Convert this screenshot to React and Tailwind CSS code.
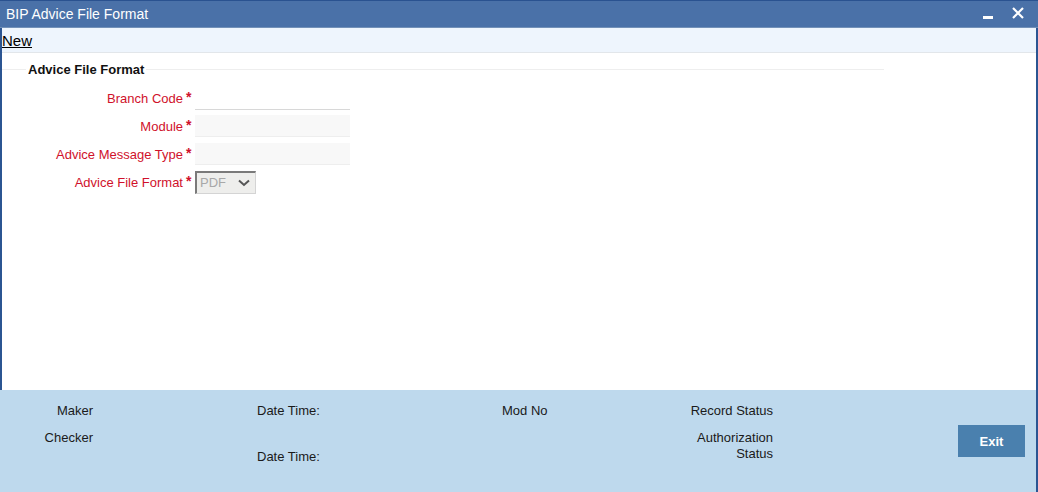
import React from "react";

const F = { fontFamily: '"Liberation Sans", Arial, sans-serif' };

function Row({ label, children }) {
  return (
    <div className="flex h-[28px] items-center">
      <div className="w-[181px] text-right text-[13px] text-[#d0112b] leading-none">{label}</div>
      <div className="w-[12px] self-start pt-[6px] pl-[3px] text-[14px] font-bold text-[#d0112b] leading-none">*</div>
      {children}
    </div>
  );
}

export default function App() {
  return (
    <div style={F} className="w-[1038px] h-[492px] flex flex-col bg-white overflow-hidden">
      <div className="h-[28px] shrink-0 bg-[#4a71a8] border-t border-[#2a5290] border-b border-b-[#7391b8] flex items-center pl-[6px] pr-[14px] text-white">
        <span className="text-[14px] leading-none">BIP Advice File Format</span>
        <div className="ml-auto flex items-center gap-[19px]">
          <div className="w-[10px] h-[3px] bg-white mt-[6px]" />
          <svg width="12" height="12" viewBox="0 0 12 12" className="mb-[3px]">
            <path d="M1 1 L11 11 M11 1 L1 11" stroke="white" strokeWidth="2.2" />
          </svg>
        </div>
      </div>
      <div className="flex-1 flex flex-col border-x-2 border-[#2b5592]">
        <div className="h-[25px] shrink-0 bg-[#eef5fd] border-b border-[#e2e6ea] flex items-center pl-0">
          <span className="text-[15px] underline text-black leading-none">New</span>
        </div>
        <div className="flex-1 flex flex-col">
          <div className="flex items-center h-[20px] mt-[6px] w-[882px]">
            <div className="w-[24px] h-px bg-[#eeeeee]" />
            <span className="px-[2px] text-[13px] font-bold text-[#111] leading-none">Advice File Format</span>
            <div className="flex-1 h-px bg-[#eeeeee]" />
          </div>
          <div className="flex flex-col mt-[5px]">
            <Row label="Branch Code">
              <div className="w-[155px] h-[22px] mt-[2px] bg-white border-b-[1.5px] border-[#d8d8d8]" />
            </Row>
            <Row label="Module">
              <div className="w-[155px] h-[22px] bg-[#f8f8f8] border-b border-[#eeeeee]" />
            </Row>
            <Row label="Advice Message Type">
              <div className="w-[155px] h-[22px] bg-[#f8f8f8] border-b border-[#eeeeee]" />
            </Row>
            <Row label="Advice File Format">
              <div className="w-[61px] h-[23px] bg-[#eeeeec] border-t-2 border-l-2 border-[#7a7a7a] border-r border-b border-r-[#d4d4d4] border-b-[#d4d4d4] flex items-center pl-[3px] pr-[5px]">
                <span className="text-[13px] text-[#a8a8a8] leading-none">PDF</span>
                <svg width="12" height="8" viewBox="0 0 12 8" className="ml-auto">
                  <path d="M1 1.5 L6 6 L11 1.5" stroke="#555" strokeWidth="2" fill="none" />
                </svg>
              </div>
            </Row>
          </div>
        </div>
      </div>
      <div className="h-[102px] shrink-0 bg-[#bed9ed] flex text-[13px] text-[#1a1a1a] leading-none relative border-r-2 border-[#2b5592]">
        <div className="w-[93px] flex flex-col items-end pt-[14px]">
          <span>Maker</span>
          <span className="mt-[14px]">Checker</span>
        </div>
        <div className="ml-[164px] w-[150px] flex flex-col pt-[14px]">
          <span>Date Time:</span>
          <span className="mt-[33px]">Date Time:</span>
        </div>
        <div className="ml-[95px] w-[100px] pt-[14px]">
          <span>Mod No</span>
        </div>
        <div className="ml-[71px] w-[100px] flex flex-col items-end pt-[14px] text-right">
          <span>Record Status</span>
          <span className="mt-[14px]">Authorization</span>
          <span className="mt-[3px]">Status</span>
        </div>
        <div className="ml-auto mr-[11px] pt-[35px]">
          <button className="w-[67px] h-[32px] bg-[#4a80ae] text-white font-bold text-[13px]">Exit</button>
        </div>
      </div>
    </div>
  );
}
